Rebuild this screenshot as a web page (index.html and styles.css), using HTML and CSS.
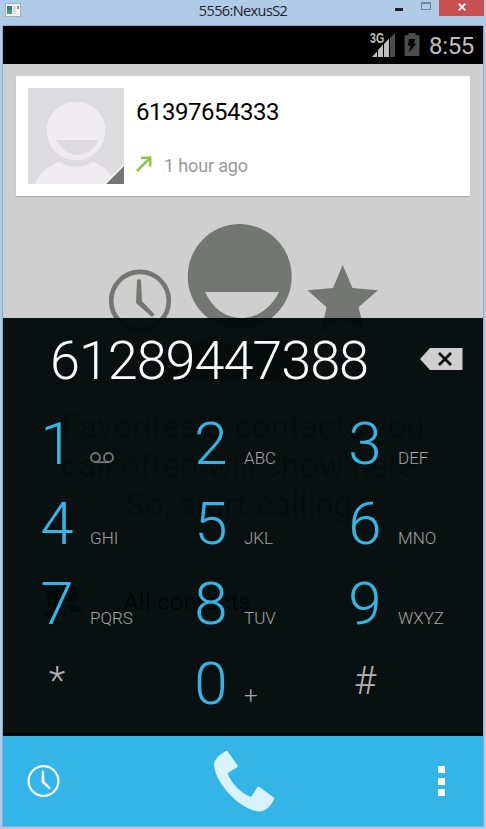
FILE: index.html
```html
<!DOCTYPE html>
<html lang="en">
<head>
<meta charset="utf-8">
<title>5556:NexusS2</title>
<link rel="stylesheet" href="styles.css">
</head>
<body>
<div class="window">
  <header class="titlebar">
    <svg class="app-icon" width="16" height="14" viewBox="0 0 16 14"><rect x=".5" y=".5" width="15" height="13" fill="#f3f3f0" stroke="#a3b0bd"/><path d="M2 3h5v8H2z" fill="#3b7894"/><path d="M2 7h5v4H2z" fill="#4a9a7c"/><path d="M8 3h3v8H8z" fill="#dcdce2"/><path d="M12 3h2v3h-2z" fill="#6aa58c"/></svg>
    <h1 class="title">5556:NexusS2</h1>
    <div class="controls">
      <span class="minimize"></span>
      <span class="maximize"></span>
      <span class="close"><svg width="8" height="8" viewBox="0 0 8 8"><path d="M.7.7l6.6 6.6M7.300.7L.7 7.300" stroke="#fff" stroke-width="1.7"/></svg></span>
    </div>
  </header>
  <main class="screen">
    <div class="statusbar">
      <svg width="26" height="25" viewBox="0 0 26 25"><path d="M1 24l5-5.500V24zM7 17l5-5.500V24H7zM13 11l5-5.500V24h-5z" fill="#bebebe"/><path d="M19 5l5-5v24h-5z" fill="#4b4d4b"/></svg>
      <span class="network">3G</span>
      <svg class="battery" width="16" height="24" viewBox="0 0 16 24"><path d="M4.500 0h7v2H15.500v21H.5V2h4z" fill="#4b4d4b"/><path d="M5 6h6.500L9.500 10.500H12.500L5 19.500l1.500-7H4z" fill="#000"/></svg>
      <time class="clock">8:55</time>
    </div>
    <section class="favorites">
      <article class="card">
        <svg class="avatar" width="96" height="96" viewBox="0 0 96 96"><path d="M0 0h96v96H0z" fill="#dcdbde"/><circle cx="48" cy="43" r="29.300" fill="#efecf0"/><path d="M28 52h42.300C66 61 58 67 49.500 67S33 61 28 52z" fill="#dcdbde"/><path d="M7 96c3-10 13-18 24-22 10 6 25 6 34 0 10 3 18 10 23 22z" fill="#efecf0"/><path d="M76 96l20-20v20z" fill="#fff"/><path d="M78 96l18-18v18z" fill="#747674"/></svg>
        <div class="call">
          <div class="call-number">61397654333</div>
          <div class="call-meta"><svg width="16" height="16" viewBox="0 0 16 16"><path d="M1 15L14 2M5 1.800h9.200V10.500" fill="none" stroke="#8dc63f" stroke-width="2.500"/></svg><span>1 hour ago</span></div>
        </div>
      </article>
      <svg class="illustration" width="310" height="192" viewBox="90 210 310 192">
        <g fill="#747673"><circle cx="140" cy="300.700" r="28.800" fill="none" stroke="#747673" stroke-width="4.600"/><path d="M137 279.500h4l1 21.500 12.500 13.500-2.500 2.500L136 303z"/>
        <path fill-rule="evenodd" d="M239.700 224a52 52.500 0 1 1 0 105a52 52.500 0 1 1 0-105zM205 292c8 17 21 26 36 26s30-9 38-26z"/>
        <path d="M342.700 265l9.800 23 25.500 2.200-19.500 17 6.300 24.800-22.100-13-21.700 13 5.500-24.800-19-17 25.500-2.200zM165 381c5-20 21-36 43-45 17 11 46 11 64 0 21 8 36 24 41 45z"/></g>
      </svg>
      <p class="empty">Favorites &amp; contacts you<br>call often will show here.<br>So, start calling.</p>
      <div class="contacts"><svg width="40" height="34" viewBox="0 0 40 34"><circle cx="27" cy="9" r="9"/><circle cx="12" cy="14" r="9"/><path d="M0 33c1-7 7-9 12-9s13 3 14 9zM24 21c8-2 14 1 16 7H28z"/></svg><span>All contacts</span></div>
    </section>
    <section class="dialpad">
      <div class="entry"><output>61289447388</output><svg width="43" height="22" viewBox="0 0 43 22"><path d="M0 11L10 0h32.500v22H10z" fill="#cfcfcf"/><path d="M19 5l12 12M31 5L19 17" stroke="#08100f" stroke-width="2.800"/></svg></div>
      <div class="keys">
        <div class="key"><b>1</b><svg width="24" height="12" viewBox="0 0 24 12"><g fill="none" stroke="#777" stroke-width="1.800"><circle cx="5.500" cy="5.500" r="4.500"/><circle cx="18.500" cy="5.500" r="4.500"/><path d="M5 10.200h14"/></g></svg></div>
        <div class="key"><b>2</b><small>ABC</small></div>
        <div class="key"><b>3</b><small>DEF</small></div>
        <div class="key"><b>4</b><small>GHI</small></div>
        <div class="key"><b>5</b><small>JKL</small></div>
        <div class="key"><b>6</b><small>MNO</small></div>
        <div class="key"><b>7</b><small>PQRS</small></div>
        <div class="key"><b>8</b><small>TUV</small></div>
        <div class="key"><b>9</b><small>WXYZ</small></div>
        <div class="key symbol"><b>*</b></div>
        <div class="key"><b>0</b><small class="plus">+</small></div>
        <div class="key symbol"><b>#</b></div>
      </div>
    </section>
    <nav class="actions">
      <svg width="34" height="34" viewBox="0 0 34 34"><circle cx="16.500" cy="17" r="14.900" fill="none" stroke="#fff" stroke-width="2.200"/><path d="M14.800 6.500h2l.7 11 6.500 6.500-1.600 1.600L14.500 18.500z" fill="#fff"/></svg>
      <svg class="handset" width="62" height="62" viewBox="0 0 62 62"><path d="M12 1.500c1.500-.8 2.500-.4 3.300.8l8.900 12.500c.8 1.200.5 2.200-.5 3L14.500 23c3.500 10 14 21 23.800 24l5.500-9c.8-1.300 2-1.500 3.200-.7L60 47c1.200.9 1.300 2 .6 3.200-3 6-8.500 11.500-14 11.300C26 60 1 31 1 14.500 1 9.500 7 4.500 12 1.500z" fill="#d8f2fe"/></svg>
      <span class="overflow"><i></i><i></i><i></i></span>
    </nav>
  </main>
</div>
</body>
</html>
```
FILE: styles.css
```css
* { box-sizing: border-box; }
body { margin: 0; background: #b0cbe8; font-family: Roboto, sans-serif; }
.window { width: 486px; height: 829px; padding: 0 3px 3px; overflow: hidden; }
.titlebar { display: grid; grid-template-columns: 1fr auto 1fr; height: 26px; }
.app-icon { margin: 3px 0 0 2px; }
.title { margin: 0; font: 400 14.5px/21px "Open Sans", sans-serif; letter-spacing: -.6px; color: #222; }
.controls { display: flex; justify-content: flex-end; align-items: flex-start; }
.minimize { width: 8px; height: 3px; margin: 8px 18px 0 0; background: #222; }
.maximize { width: 10px; height: 8px; margin: 2px 8px 0 0; border: 1px solid #71829a; border-top-width: 2px; }
.close { display: flex; justify-content: center; align-items: center; width: 45px; height: 16px; padding-bottom: 3px; margin-right: -1px; background: #c75050; }
.screen { position: relative; width: 480px; height: 800px; outline: 1px solid #8faaca; background: #cfcfcf; }
.statusbar { position: relative; display: flex; justify-content: flex-end; align-items: center; height: 38px; padding: 0 9px 0 0; background: #000; }
.battery { margin: 0 9px 0 7px; }
.network { position: absolute; left: 367px; top: 5px; font: 700 14px/14px "Liberation Sans", sans-serif; transform: scaleX(.76); transform-origin: left; color: #bebebe; }
.clock { font-size: 24px; line-height: 38px; letter-spacing: -.35px; padding-top: 2px; color: #bebebe; }
.favorites { height: 672px; padding-top: 12px; overflow: hidden; }
.card { display: flex; width: 454px; height: 120px; margin-left: 13px; padding: 12px; background: #fff; box-shadow: 0 1px 1px #aaa; }
.call { display: flex; flex-direction: column; margin-left: 12px; }
.call-number { font-size: 24px; line-height: 48px; letter-spacing: -.48px; color: #000; }
.call-meta { display: flex; gap: 12px; height: 28px; margin-top: 15px; font-size: 18px; line-height: 30px; letter-spacing: -.15px; color: #999; }
.call-meta svg { margin-top: 5px; }
.illustration { display: block; margin: 14px 0 0 87px; }
.empty { margin: 5px 0 0; font-size: 33.300px; line-height: 39px; text-align: center; color: #747673; }
.contacts { display: flex; align-items: center; gap: 40px; height: 91px; margin: 47px 12px 0; padding: 0 0 30px 28px; font-size: 24.300px; color: #000; border-bottom: 1px solid #aaa; }
.contacts svg { fill: #555; }
.dialpad { position: absolute; left: 0; top: 292px; width: 480px; height: 418px; border-bottom: 3px solid #000605; background: rgba(0, 8, 7, .956); }
.entry { display: flex; justify-content: space-between; align-items: center; height: 86px; padding: 0 20px 0 47px; font-size: 54px; font-weight: 300; color: #fff; }
.entry output { line-height: 84px; letter-spacing: -1.050px; }
.entry svg { margin-top: -4px; }
.keys { display: grid; grid-template-columns: repeat(3, 154px); grid-auto-rows: 80px; padding-left: 30px; }
.key { display: flex; align-items: baseline; gap: 9px; line-height: 80px; }
.key b { width: 48px; font-size: 60px; font-weight: 300; text-align: center; color: #33b5e5; }
.key small { font-size: 17px; line-height: 20px; font-weight: 300; color: #a4a4a4; }
.key .plus { font-size: 24px; }
.key.symbol b { font-size: 38px; line-height: 74px; color: #b4b4b4; }
.actions { display: flex; justify-content: space-between; align-items: center; height: 90px; padding: 0 38px 0 24px; background: #33b5e7; }
.handset { margin-right: 12px; }
.overflow { display: grid; gap: 4.500px; }
.overflow i { width: 7px; height: 7px; background: #fff; }
```
